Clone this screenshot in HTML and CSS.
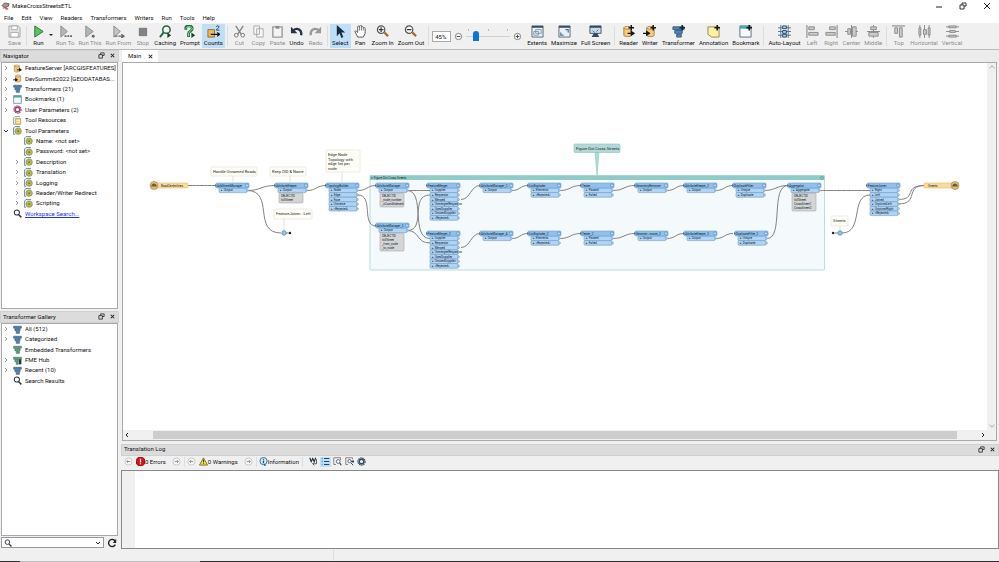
FILE: index.html
```html
<!DOCTYPE html>
<html lang="en">
<head>
<meta charset="utf-8">
<title>MakeCrossStreetsETL</title>
<link rel="stylesheet" href="styles.css">
</head>
<body>
<svg class="sprites" aria-hidden="true">
  <defs>
    <symbol id="save" viewBox="0 0 14 14"><path d="M1 1h10l2 2v10H1z" fill="#e2e2e2" stroke="#aaa"/><path d="M4 1h6v4H4zM3 8h8v5H3z" fill="#fff" stroke="#aaa"/></symbol>
    <symbol id="run" viewBox="0 0 14 14"><path d="M3 1l9 6-9 6z" fill="#5cc163" stroke="#27702f"/></symbol>
    <symbol id="runto" viewBox="0 0 14 14"><path d="M2 1l7 6-7 6z" fill="#b5b5b5" stroke="#8a8a8a"/><path d="M6 12h2M9 12h2M12 12h2" stroke="#666" stroke-width="2"/></symbol>
    <symbol id="runthis" viewBox="0 0 14 14"><path d="M3 1l8 6-8 6z" fill="#b5b5b5" stroke="#8a8a8a"/><circle cx="11" cy="12" r="1.6" fill="#666"/></symbol>
    <symbol id="runfrom" viewBox="0 0 14 14"><path d="M2 1l7 6-7 6z" fill="#c5c5c5" stroke="#8a8a8a"/><path d="M3 12h3M7 12h5M10 10l3 2-3 2" fill="none" stroke="#666" stroke-width="1.5"/></symbol>
    <symbol id="stop" viewBox="0 0 14 14"><path d="M3 3h9v9H3z" fill="#838383"/></symbol>
    <symbol id="caching" viewBox="0 0 14 14"><circle cx="8" cy="5" r="4" fill="#eef6ef" stroke="#24613f" stroke-width="1.6"/><path d="M5 8l-4 5" stroke="#24613f" stroke-width="2" fill="none"/><path d="M9 8l4 3-4 3z" fill="#173c2a"/></symbol>
    <symbol id="prompt" viewBox="0 0 14 14"><path d="M3 5V3c0-3 7-3 7 1 0 2-4 3-4 5v4" fill="none" stroke="#22703a" stroke-width="3"/><path d="M3 4c0-3 7-3 7 0 0 2-4 3-4 5v3" fill="none" stroke="#a5dfa9"/><path d="M9 8l4 3-4 3z" fill="#173c2a"/></symbol>
    <symbol id="counts" viewBox="0 0 14 14"><path d="M1 5h7v8H1z" fill="#f7b954" stroke="#9c6a1e"/><path d="M4 10h9M11 8l2.500 2-2.500 2" fill="none" stroke="#171717" stroke-width="1.4"/><path d="M10 2c0-1.500 3-1.500 3 0S10 4 10 5.500h3.500" fill="none" stroke="#26415d"/></symbol>
    <symbol id="cut" viewBox="0 0 14 14"><path d="M3 1l6 9M11 1L5 10" stroke="#858585" stroke-width="1.500"/><circle cx="3.500" cy="11" r="2" fill="none" stroke="#777"/><circle cx="10.500" cy="11" r="2" fill="none" stroke="#777"/></symbol>
    <symbol id="copy" viewBox="0 0 14 14"><path d="M2 1h6v9H2zM5 4h7v9H5z" fill="#f6f6f6" stroke="#aaa"/></symbol>
    <symbol id="paste" viewBox="0 0 14 14"><path d="M2 2h10v11H2z" fill="#f4f4f4" stroke="#999" stroke-width="1.500"/><path d="M5 1h4v3H5z" fill="#8a8a8a"/></symbol>
    <symbol id="undo" viewBox="0 0 14 14"><path d="M3 6c5-4 10-1 9 5" fill="none" stroke="#263442" stroke-width="2.500"/><path d="M1 2v7h7z" fill="#263442"/></symbol>
    <symbol id="redo" viewBox="0 0 14 14"><path d="M11 6C6 2 1 5 2 11" fill="none" stroke="#999" stroke-width="2.500"/><path d="M13 2v7H6z" fill="#999"/></symbol>
    <symbol id="select" viewBox="0 0 14 14"><path d="M3 0v12l3-3 2 5 2-1-2-5h4z" fill="#172b3d"/></symbol>
    <symbol id="pan" viewBox="0 0 14 14"><path d="M4 13L1 7c0-1 1-1 3 1V2c0-1 1-1 2 0V1c1-1 2-1 2 0v1c1-1 2 0 2 1 1-1 2 0 2 1v5l-2 4z" fill="#fff" stroke="#555"/><path d="M6 2v4M8 2v4M10 3v3" stroke="#777"/></symbol>
    <symbol id="zoomin" viewBox="0 0 14 14"><circle cx="5.500" cy="5" r="4" fill="#f7f7f7" stroke="#555" stroke-width="1.300"/><path d="M9 8l4 4" stroke="#a06b24" stroke-width="2.400"/><path d="M3 5h5M5.500 2.500v5" stroke="#333" stroke-width="1.300"/></symbol>
    <symbol id="zoomout" viewBox="0 0 14 14"><circle cx="5.500" cy="5" r="4" fill="#f7f7f7" stroke="#555" stroke-width="1.300"/><path d="M9 8l4 4" stroke="#a06b24" stroke-width="2.400"/><path d="M3 5h5" stroke="#333" stroke-width="1.300"/></symbol>
    <symbol id="extents" viewBox="0 0 14 14"><path d="M1 1h12v12H1z" fill="#e8eff5" stroke="#56697a"/><path d="M1 1h12v2H1z" fill="#3b4d5e"/><path d="M5 5h6v4H5zM3 7h5v4H3z" fill="none" stroke="#8098ac"/></symbol>
    <symbol id="maximize" viewBox="0 0 14 14"><path d="M1 1h12v12H1z" fill="#e8eff5" stroke="#56697a"/><path d="M1 1h12v2H1z" fill="#3b4d5e"/><path d="M8 5h3v3M6 11H3V8" fill="none" stroke="#46739a" stroke-width="1.300"/></symbol>
    <symbol id="full" viewBox="0 0 14 14"><path d="M1 1h12v8H1z" fill="#cbdbe8" stroke="#405468"/><path d="M1 1h12v2H1z" fill="#304a62"/><path d="M5 9L3 13h8l-2-4z" fill="#334a60"/><path d="M4 6l2 2M10 5L8 7" stroke="#38658b"/></symbol>
    <symbol id="reader" viewBox="0 0 14 14"><path d="M2 3v8c0 2 8 2 8 0V3z" fill="#f5ca78" stroke="#a78037"/><ellipse cx="6" cy="3" rx="4" ry="1.500" fill="#ffe2a7" stroke="#a78037"/><path d="M6 9h6M10 7l3 2-3 2z" stroke="#171717" stroke-width="1.300"/></symbol>
    <symbol id="writer" viewBox="0 0 14 14"><path d="M4 3v8c0 2 8 2 8 0V3z" fill="#f5ca78" stroke="#a78037"/><ellipse cx="8" cy="3" rx="4" ry="1.500" fill="#ffe2a7" stroke="#a78037"/><path d="M0 9h6M4 7l3 2-3 2z" stroke="#171717" stroke-width="1.300"/></symbol>
    <symbol id="readerplus" viewBox="0 0 14 14"><use href="#reader"/><path d="M10 0v6M7 3h6" stroke="#171717" stroke-width="1.600"/></symbol>
    <symbol id="writerplus" viewBox="0 0 14 14"><use href="#writer"/><path d="M11 0v6M8 3h6" stroke="#171717" stroke-width="1.600"/></symbol>
    <symbol id="transformer" viewBox="0 0 14 14"><path d="M1 2h12v3H1zM3 6h8v3H3zM5 10h5v3H5z" fill="#5586b5" stroke="#375b80"/></symbol>
    <symbol id="transformerplus" viewBox="0 0 14 14"><use href="#transformer"/><path d="M11 0v6M8 3h6" stroke="#172330" stroke-width="1.700"/></symbol>
    <symbol id="greentransformer" viewBox="0 0 14 14"><path d="M1 2h12v3H1zM3 6h8v3H3zM5 10h5v3H5z" fill="#67a58a" stroke="#39705a"/></symbol>
    <symbol id="hub" viewBox="0 0 14 14"><path d="M1 2h12v3H1zM3 6h5v3H3zM5 10h3v3H5z" fill="#67a58a" stroke="#39705a"/><path d="M9 5h4v8H9z" fill="#1e3b38"/></symbol>
    <symbol id="annotation" viewBox="0 0 14 14"><path d="M1 2h12v11H5l-4-3z" fill="#fff0a0" stroke="#8d8657"/><path d="M11 0v6M8 3h6" stroke="#171717" stroke-width="1.700"/></symbol>
    <symbol id="window" viewBox="0 0 14 14"><path d="M1 1h12v12H1z" fill="#f5f9fc" stroke="#536a7d"/><path d="M1 1h12v3H1z" fill="#4ca9a5"/></symbol>
    <symbol id="bookmark" viewBox="0 0 14 14"><use href="#window"/><path d="M11 0v6M8 3h6" stroke="#171717" stroke-width="1.700"/></symbol>
    <symbol id="auto" viewBox="0 0 14 14"><path d="M0 3h14M0 7h14M0 11h14M3 0v14M11 0v14" stroke="#50708e"/><path d="M5 1h4v3H5zM5 6h4v3H5zM5 10h4v3H5z" fill="#b4cee5" stroke="#244767"/></symbol>
    <symbol id="left" viewBox="0 0 14 14"><path d="M1 0v14" stroke="#777"/><path d="M3 2h6v3H3zM3 8h10v3H3z" fill="#ccc" stroke="#888"/></symbol>
    <symbol id="right" viewBox="0 0 14 14"><path d="M13 0v14" stroke="#777"/><path d="M5 2h6v3H5zM1 8h10v3H1z" fill="#ccc" stroke="#888"/></symbol>
    <symbol id="center" viewBox="0 0 14 14"><path d="M7 0v14M0 7h14" stroke="#888"/><path d="M3 4h3v6H3zM8 2h4v10H8z" fill="#ccc" stroke="#888"/></symbol>
    <symbol id="middle" viewBox="0 0 14 14"><path d="M7 0v14M0 7h14" stroke="#888"/><path d="M4 2h6v3H4zM2 8h10v4H2z" fill="#ccc" stroke="#888"/></symbol>
    <symbol id="top" viewBox="0 0 14 14"><path d="M0 1h14" stroke="#777"/><path d="M3 3h3v6H3zM8 3h3v10H8z" fill="#ccc" stroke="#888"/></symbol>
    <symbol id="horizontal" viewBox="0 0 14 14"><path d="M2 0v14M7 0v14M12 0v14" stroke="#888"/><path d="M1 3h2v8H1zM6 5h3v5H6zM11 3h2v8h-2z" fill="#ccc" stroke="#888"/></symbol>
    <symbol id="vertical" viewBox="0 0 14 14"><path d="M0 2h14M0 7h14M0 12h14" stroke="#888"/><path d="M3 1h8v2H3zM4 6h6v2H4zM3 11h8v2H3z" fill="#ccc" stroke="#888"/></symbol>
    <symbol id="params" viewBox="0 0 14 14"><path d="M3 13H1V3l2-2h8" fill="none" stroke="#456b93" stroke-width="1.300"/><circle cx="8" cy="8" r="5" fill="#b4b957" stroke="#8b8f45"/><circle cx="8" cy="8" r="1.500" fill="#727b36"/></symbol>
    <symbol id="resources" viewBox="0 0 14 14"><path d="M3 13H1V3l2-2h8" fill="none" stroke="#7b8797" stroke-width="1.300"/><path d="M4 4h8v9H4z" fill="#f4cf83" stroke="#b28a3c"/><path d="M5 7h6M5 10h6" stroke="#fff"/></symbol>
    <symbol id="gear" viewBox="0 0 14 14"><circle cx="7" cy="7" r="5.500" fill="none" stroke="currentColor" stroke-width="2" stroke-dasharray="2.300 1"/><circle cx="7" cy="7" r="3.500" fill="none" stroke="currentColor" stroke-width="2"/></symbol>
    <symbol id="search" viewBox="0 0 14 14"><circle cx="6" cy="5.500" r="4" fill="none" stroke="#26394a" stroke-width="1.600"/><path d="M9 9l4 4" stroke="#26394a" stroke-width="2.300"/></symbol>
    <symbol id="chevron" viewBox="0 0 6 6"><path d="M2 1l2 2-2 2" fill="none" stroke="#999"/></symbol>
    <symbol id="opened" viewBox="0 0 6 6"><path d="M1 2l2 2 2-2" fill="none" stroke="#333"/></symbol>
    <symbol id="close" viewBox="0 0 8 8"><path d="M2 2l4 4M6 2L2 6" stroke="#222" stroke-width="1.200"/></symbol>
    <symbol id="restore" viewBox="0 0 8 8"><path d="M3 3V1h4v3H5M1 3h4v4H1z" fill="none" stroke="#333"/></symbol>
    <symbol id="back" viewBox="0 0 10 10"><circle cx="5" cy="5" r="4" fill="#f8f8f8" stroke="#c4c4c4"/><path d="M7 5H3M4.500 3.500L3 5l1.500 1.500" fill="none" stroke="#888"/></symbol>
    <symbol id="forward" viewBox="0 0 10 10"><circle cx="5" cy="5" r="4" fill="#f8f8f8" stroke="#c4c4c4"/><path d="M3 5h4M5.500 3.500L7 5 5.500 6.500" fill="none" stroke="#888"/></symbol>
    <symbol id="error" viewBox="0 0 10 10"><path d="M3 0h4l3 3v4l-3 3H3L0 7V3z" fill="#cf1717" stroke="#811"/><path d="M5 2v4M5 7v1" stroke="#fff" stroke-width="1.400"/></symbol>
    <symbol id="warning" viewBox="0 0 10 10"><path d="M5 1l4.500 8h-9z" fill="#f3dd35" stroke="#75701c"/><path d="M5 3v3M5 7v1" stroke="#222"/></symbol>
    <symbol id="info" viewBox="0 0 10 10"><circle cx="5" cy="4.500" r="4" fill="#d8edfa" stroke="#2c6594"/><path d="M5 4v3M5 2v1M6 8l1 2" stroke="#174d7b" stroke-width="1.400"/></symbol>
    <symbol id="wrap" viewBox="0 0 12 12"><path d="M1 1l2 5 2-4 2 4 2-5" fill="none" stroke="#26333e" stroke-width="1.600"/><path d="M10 3v6H5M7 7L5 9l2 2" fill="none" stroke="#26333e"/></symbol>
    <symbol id="list" viewBox="0 0 12 12"><path d="M4 2h7M4 6h7M4 10h7" stroke="#27435d" stroke-width="1.300"/><path d="M1 2h1M1 6h1M1 10h1" stroke="#2177b5" stroke-width="2"/></symbol>
    <symbol id="find" viewBox="0 0 12 12"><path d="M4 10H1V1h9v3" fill="none" stroke="#666"/><circle cx="7" cy="6" r="2.500" fill="#fff" stroke="#29445d"/><path d="M9 8l2 3" stroke="#29445d" stroke-width="1.600"/></symbol>
    <symbol id="findnext" viewBox="0 0 12 12"><path d="M4 10H1V1h9v2" fill="none" stroke="#666"/><circle cx="6" cy="5.500" r="2.200" fill="#fff" stroke="#29445d"/><path d="M8 8l3 3M8 6h4M10 4l2 2-2 2" fill="none" stroke="#29445d" stroke-width="1.300"/></symbol>
    <symbol id="refresh" viewBox="0 0 12 12"><path d="M10 8a4.300 4.300 0 1 1 0-4" fill="none" stroke="#222" stroke-width="1.700"/><path d="M11 1v5H7z" fill="#222"/></symbol>
    <symbol id="minus" viewBox="0 0 10 10"><circle cx="5" cy="5" r="3.500" fill="#fff" stroke="#777"/><path d="M3 5h4" stroke="#444"/></symbol>
    <symbol id="plus" viewBox="0 0 10 10"><circle cx="5" cy="5" r="3.500" fill="#fff" stroke="#777"/><path d="M3 5h4M5 3v4" stroke="#444"/></symbol>
    <symbol id="logo" viewBox="0 0 10 10"><path d="M1 4l3-3 5 1-1 3-4 1z" fill="#a89990" stroke="#665b58"/><path d="M2 7l3-1 1 3M5 6l3 2" fill="none" stroke="#c4534b" stroke-width="1.200"/></symbol>
  </defs>
</svg>

<div class="app">
  <header class="titlebar">
    <svg class="logo"><use href="#logo"/></svg>
    <h1>MakeCrossStreetsETL</h1>
    <div class="window-buttons">
      <button aria-label="Minimize"><svg viewBox="0 0 8 8"><path d="M1 5h6" stroke="#222"/></svg></button>
      <button aria-label="Restore"><svg><use href="#restore"/></svg></button>
      <button aria-label="Close"><svg viewBox="0 0 8 8"><path d="M1 1l6 6M7 1L1 7" stroke="#222"/></svg></button>
    </div>
  </header>
  <nav class="menubar">
    <button>File</button><button>Edit</button><button>View</button><button>Readers</button><button>Transformers</button><button>Writers</button><button>Run</button><button>Tools</button><button>Help</button>
  </nav>

  <div class="toolbar">
    <button class="tool" disabled><svg><use href="#save"/></svg>Save</button>
    <span class="sep"></span>
    <button class="tool"><svg><use href="#run"/></svg>Run</button>
    <button class="drop" aria-label="Run options"></button>
    <button class="tool" disabled><svg><use href="#runto"/></svg>Run To</button>
    <button class="tool" disabled><svg><use href="#runthis"/></svg>Run This</button>
    <button class="tool" disabled><svg><use href="#runfrom"/></svg>Run From</button>
    <button class="tool" disabled><svg><use href="#stop"/></svg>Stop</button>
    <button class="tool"><svg><use href="#caching"/></svg>Caching</button>
    <button class="tool"><svg><use href="#prompt"/></svg>Prompt</button>
    <button class="tool on"><svg><use href="#counts"/></svg>Counts</button>
    <span class="sep"></span>
    <button class="tool" disabled><svg><use href="#cut"/></svg>Cut</button>
    <button class="tool" disabled><svg><use href="#copy"/></svg>Copy</button>
    <button class="tool" disabled><svg><use href="#paste"/></svg>Paste</button>
    <button class="tool"><svg><use href="#undo"/></svg>Undo</button>
    <button class="tool" disabled><svg><use href="#redo"/></svg>Redo</button>
    <span class="sep"></span>
    <button class="tool on"><svg><use href="#select"/></svg>Select</button>
    <button class="tool"><svg><use href="#pan"/></svg>Pan</button>
    <button class="tool"><svg><use href="#zoomin"/></svg>Zoom In</button>
    <button class="tool"><svg><use href="#zoomout"/></svg>Zoom Out</button>
    <span class="sep"></span>
    <div class="zoom">
      <input class="percent" type="text" value="45%" aria-label="Zoom level">
      <button aria-label="Decrease zoom"><svg><use href="#minus"/></svg></button>
      <input class="slider" type="range" min="0" max="100" value="18" aria-label="Zoom">
      <button aria-label="Increase zoom"><svg><use href="#plus"/></svg></button>
    </div>
    <button class="tool"><svg><use href="#extents"/></svg>Extents</button>
    <button class="tool"><svg><use href="#maximize"/></svg>Maximize</button>
    <button class="tool"><svg><use href="#full"/></svg>Full Screen</button>
    <span class="sep"></span>
    <button class="tool"><svg><use href="#readerplus"/></svg>Reader</button>
    <button class="tool"><svg><use href="#writerplus"/></svg>Writer</button>
    <button class="tool"><svg><use href="#transformerplus"/></svg>Transformer</button>
    <button class="tool"><svg><use href="#annotation"/></svg>Annotation</button>
    <button class="tool"><svg><use href="#bookmark"/></svg>Bookmark</button>
    <span class="sep"></span>
    <button class="tool"><svg><use href="#auto"/></svg>Auto-Layout</button>
    <button class="tool" disabled><svg><use href="#left"/></svg>Left</button>
    <button class="tool" disabled><svg><use href="#right"/></svg>Right</button>
    <button class="tool" disabled><svg><use href="#center"/></svg>Center</button>
    <button class="tool" disabled><svg><use href="#middle"/></svg>Middle</button>
    <span class="sep"></span>
    <button class="tool" disabled><svg><use href="#top"/></svg>Top</button>
    <button class="tool" disabled><svg><use href="#horizontal"/></svg>Horizontal</button>
    <button class="tool" disabled><svg><use href="#vertical"/></svg>Vertical</button>
  </div>

  <div class="workspace">
    <aside class="dock">
      <section class="panel navigator">
        <div class="panel-head"><h2>Navigator</h2><button aria-label="Float"><svg><use href="#restore"/></svg></button><button aria-label="Close"><svg><use href="#close"/></svg></button></div>
        <div class="tree-box">
          <ul class="tree nav-tree">
            <li><svg class="arrow"><use href="#chevron"/></svg><svg><use href="#reader"/></svg>FeatureServer [ARCGISFEATURES]</li>
            <li><svg class="arrow"><use href="#chevron"/></svg><svg><use href="#writer"/></svg>DevSummit2022 [GEODATABAS...</li>
            <li><svg class="arrow"><use href="#chevron"/></svg><svg><use href="#transformer"/></svg>Transformers (21)</li>
            <li><svg class="arrow"><use href="#chevron"/></svg><svg><use href="#window"/></svg>Bookmarks (1)</li>
            <li><svg class="arrow"><use href="#chevron"/></svg><svg class="plum"><use href="#gear"/></svg>User Parameters (2)</li>
            <li><svg class="arrow"></svg><svg><use href="#resources"/></svg>Tool Resources</li>
            <li><svg class="arrow"><use href="#opened"/></svg><svg><use href="#params"/></svg>Tool Parameters</li>
            <li class="child"><svg class="arrow"></svg><svg><use href="#params"/></svg>Name: &lt;not set&gt;</li>
            <li class="child"><svg class="arrow"></svg><svg><use href="#params"/></svg>Password: &lt;not set&gt;</li>
            <li class="child"><svg class="arrow"><use href="#chevron"/></svg><svg><use href="#params"/></svg>Description</li>
            <li class="child"><svg class="arrow"><use href="#chevron"/></svg><svg><use href="#params"/></svg>Translation</li>
            <li class="child"><svg class="arrow"><use href="#chevron"/></svg><svg><use href="#params"/></svg>Logging</li>
            <li class="child"><svg class="arrow"><use href="#chevron"/></svg><svg><use href="#params"/></svg>Reader/Writer Redirect</li>
            <li class="child"><svg class="arrow"><use href="#chevron"/></svg><svg><use href="#params"/></svg>Scripting</li>
            <li><svg class="arrow"></svg><svg><use href="#search"/></svg><a href="#search-workspace">Workspace Search...</a></li>
          </ul>
        </div>
      </section>
      <section class="panel gallery">
        <div class="panel-head"><h2>Transformer Gallery</h2><button aria-label="Float"><svg><use href="#restore"/></svg></button><button aria-label="Close"><svg><use href="#close"/></svg></button></div>
        <div class="tree-box">
          <ul class="tree gallery-tree">
            <li><svg class="arrow"><use href="#chevron"/></svg><svg><use href="#transformer"/></svg>All (512)</li>
            <li><svg class="arrow"><use href="#chevron"/></svg><svg><use href="#transformer"/></svg>Categorized</li>
            <li><svg class="arrow"></svg><svg><use href="#greentransformer"/></svg>Embedded Transformers</li>
            <li><svg class="arrow"><use href="#chevron"/></svg><svg><use href="#hub"/></svg>FME Hub</li>
            <li><svg class="arrow"><use href="#chevron"/></svg><svg><use href="#transformer"/></svg>Recent (10)</li>
            <li><svg class="arrow"></svg><svg><use href="#search"/></svg>Search Results</li>
          </ul>
        </div>
        <div class="search-row">
          <label class="search"><svg><use href="#search"/></svg><input type="text" aria-label="Search transformers"><svg class="arrow"><use href="#opened"/></svg></label>
          <button aria-label="Refresh"><svg><use href="#refresh"/></svg></button>
        </div>
      </section>
    </aside>

    <main class="content">
      <div class="tabs"><div class="tab">Main<button aria-label="Close tab"><svg><use href="#close"/></svg></button></div></div>
      <section class="canvas-frame">
        <div class="canvas"><svg id="diagram" role="img" aria-label="Workspace diagram"></svg></div>
        <div class="vbar"><i></i><i class="down"></i></div>
        <div class="hbar"><svg><path d="M5 1L3 3l2 2" fill="none" stroke="#222"/></svg><div class="track"><div class="thumb"></div></div><svg><path d="M3 1l2 2-2 2" fill="none" stroke="#222"/></svg></div>
      </section>
      <section class="log">
        <div class="panel-head"><h2>Translation Log</h2><button aria-label="Float"><svg><use href="#restore"/></svg></button><button aria-label="Close"><svg><use href="#close"/></svg></button></div>
        <div class="log-tools">
          <div class="group">
            <button aria-label="Previous error"><svg><use href="#back"/></svg></button>
            <button><svg><use href="#error"/></svg>0 Errors</button>
            <button class="next" aria-label="Next error"><svg><use href="#forward"/></svg></button>
          </div>
          <div class="group">
            <button aria-label="Previous warning"><svg><use href="#back"/></svg></button>
            <button><svg><use href="#warning"/></svg>0 Warnings</button>
            <button class="next" aria-label="Next warning"><svg><use href="#forward"/></svg></button>
          </div>
          <div class="group">
            <button><svg><use href="#info"/></svg>Information</button>
          </div>
          <div class="group options">
            <button aria-label="Wrap text"><svg><use href="#wrap"/></svg></button>
            <button class="on" aria-label="Line numbers"><svg><use href="#list"/></svg></button>
            <button aria-label="Find"><svg><use href="#find"/></svg></button>
            <button aria-label="Find next"><svg><use href="#findnext"/></svg></button>
            <button class="slate" aria-label="Log options"><svg><use href="#gear"/></svg></button>
          </div>
        </div>
        <div class="log-text"><div class="gutter"></div></div>
      </section>
    </main>
  </div>
  <footer class="statusbar"><span></span><span></span></footer>
  <div class="task-edge"></div>
</div>
<script src="diagram.js"></script>
</body>
</html>
```

FILE: styles.css
```css
* { box-sizing: border-box; }
body {
  margin: 0;
  font: 6px/8px Roboto, "Liberation Sans", Arial, sans-serif;
  color: #111;
  background: #f0f0f0;
}
h1, h2, ul { margin: 0; padding: 0; font: inherit; list-style: none; }
button {
  margin: 0;
  padding: 0;
  border: 0;
  background: none;
  font: inherit;
  color: inherit;
  display: flex;
  align-items: center;
}
input { font: inherit; color: inherit; margin: 0; min-width: 0; }
svg { display: block; flex: none; }
.sprites { position: absolute; width: 0; height: 0; }
.app { height: 100vh; display: flex; flex-direction: column; overflow: hidden; }

.titlebar { display: flex; align-items: center; height: 12px; padding: 0 8px 0 1px; background: #fff; gap: 2px; }
.logo { width: 9px; height: 9px; }
.window-buttons { display: flex; gap: 16px; margin-left: auto; }
.window-buttons svg { width: 8px; height: 8px; }
.menubar { display: flex; height: 11px; padding-left: 4px; gap: 8px; background: #fff; }

.toolbar { display: flex; height: 27px; padding: 1px 0 1px 5px; border-bottom: 1px solid #bbb; }
.tool { flex-direction: column; min-width: 19px; padding: 1px 2px 0; white-space: nowrap; }
.tool svg { width: 13px; height: 13px; margin-bottom: 1px; }
.tool:disabled { color: #8d8d8d; }
.on { background: #bfdff7; }
.sep { width: 1px; margin: 2px; background: #ddd; }
.drop { width: 6px; justify-content: center; }
.drop::after { content: ""; border: 2px solid transparent; border-top-color: #222; }
.zoom { display: flex; align-items: center; width: 94px; padding: 0 3px 0 1px; gap: 3px; }
.zoom svg { width: 9px; height: 9px; }
.percent { width: 19px; height: 11px; padding: 0 2px; border: 1px solid #aaa; background: #fff; }
.slider {
  flex: 1;
  height: 14px;
  appearance: none;
  background:
    linear-gradient(#bbb, #bbb) 5% 0 / 1px 2px no-repeat,
    linear-gradient(#bbb, #bbb) 50% 0 / 1px 2px no-repeat,
    linear-gradient(#bbb, #bbb) 95% 0 / 1px 2px no-repeat,
    linear-gradient(#d0d0d0, #d0d0d0) center / 100% 1px no-repeat;
}
.slider::-webkit-slider-thumb { appearance: none; width: 6px; height: 10px; background: #0878d4; border-radius: 3px 3px 0 0; }

.workspace { flex: 1; min-height: 0; display: grid; grid-template-columns: 119px 1fr; gap: 2px; }
.dock { display: flex; flex-direction: column; gap: 2px; min-height: 0; }
.panel { display: flex; flex-direction: column; min-height: 0; }
.navigator { flex: 259; }
.gallery { flex: 238; }
.panel-head { display: flex; align-items: center; flex: none; height: 12px; padding: 0 2px 1px; gap: 4px; background: #dcdcdc; border: 1px solid #d0d0d0; }
.panel-head h2 { flex: 1; }
.panel-head svg, .tab svg { width: 7px; height: 7px; }
.tree-box { flex: 1; min-height: 0; margin: 0 1px; border: 1px solid #aaa; background: #fff; overflow: hidden; }
.tree { display: grid; grid-auto-rows: 1fr; }
.nav-tree { height: 156px; }
.gallery-tree { height: 62px; }
.tree li { display: flex; align-items: center; white-space: nowrap; padding-left: 1px; }
.tree svg { width: 9px; height: 9px; margin-right: 3px; }
.tree .arrow { width: 6px; height: 6px; margin-right: 4px; }
.tree .child { padding-left: 12px; }
.tree a { color: #1a35e8; }
.plum { color: #9c3d72; }
.search-row { display: flex; align-items: center; height: 13px; padding: 0 2px 0 1px; gap: 3px; }
.search { flex: 1; display: flex; align-items: center; min-width: 0; height: 11px; padding: 0 2px; background: #fff; border: 1px solid #999; }
.search input { flex: 1; border: 0; padding: 0; background: none; height: 9px; }
.search svg { width: 8px; height: 8px; }
.search .arrow { width: 6px; height: 6px; }
.search-row button svg { width: 10px; height: 10px; }

.content { display: flex; flex-direction: column; min-width: 0; min-height: 0; }
.tabs { height: 12px; padding-left: 1px; display: flex; background: #ececec; }
.tab { display: flex; align-items: center; gap: 6px; padding: 0 4px 0 6px; background: #fff; }
.canvas-frame { flex: 379; min-height: 0; margin: 0 2px 0 1px; display: grid; grid-template: 1fr 10px / 1fr 9px; border: 1px solid #aaa; background: #f0f0f0; }
.canvas { overflow: hidden; background: #fff; }
.canvas svg { width: 100%; height: 100%; overflow: visible; }
.vbar { display: flex; flex-direction: column; justify-content: space-between; align-items: center; padding: 3px 0; }
.vbar i { width: 4px; height: 4px; border: solid #bbb; border-width: 1px 0 0 1px; transform: rotate(45deg); }
.vbar .down { transform: rotate(225deg); }
.hbar { display: flex; align-items: center; }
.hbar svg { width: 8px; height: 6px; }
.track { flex: 1; padding: 0 22px; }
.thumb { height: 8px; background: #cdcdcd; }
.log { flex: 106; min-height: 0; display: flex; flex-direction: column; margin-top: 3px; }
.log-tools { display: flex; align-items: center; height: 12px; padding-left: 1px; }
.log-tools svg { width: 9px; height: 9px; }
.group { display: flex; align-items: center; gap: 1px; padding: 0 2px 0 1px; border-right: 1px solid #ddd; }
.group button { height: 10px; padding: 0 1px; }
.group .next { margin-left: 3px; }
.group.options { border: 0; padding-left: 5px; }
.slate { color: #33495c; }
.log-text { flex: 1; display: flex; margin-top: 2px; background: #fff; border: 1px solid #888; }
.gutter { width: 13px; background: #f0f0f0; }

.statusbar { display: flex; flex: none; height: 12px; }
.statusbar span { flex: 2; border-left: 1px solid #ddd; }
.statusbar span:first-child { flex: 1; border: 0; }
.task-edge { flex: none; height: 1px; background: linear-gradient(90deg, #333 0 2%, #bbb 2% 20%, #333 20%); }

#diagram text { font-size: 3px; fill: #0e1b2a; }
#diagram .note-text { font-size: 4px; fill: #222; }
.wire { fill: none; stroke: #858180; stroke-width: 1; }
.head { fill: #91c0ec; stroke: #6b9dcd; }
.port { fill: #afd4f5; stroke: #7199c0; }
.attrs { fill: #d5d5d5; stroke: #aaa; }
.feature { fill: #fadb9c; stroke: #e9bc6c; }
.note { fill: #fffff8; stroke: #deded0; }
.area { fill: #f4fafb; stroke: #8fc9c7; }
.area-head { fill: #91cbc9; }
.big-note { fill: #b0dad7; stroke: #8ac4c0; }
```

FILE: diagram.js
```js
const NS = "http://www.w3.org/2000/svg";
const root = document.getElementById("diagram");
const scene = add(root, "g", { transform: "translate(-123 -63)" });

function add(parent, tag, attrs, text) {
  const el = document.createElementNS(NS, tag);
  for (const key in attrs) el.setAttribute(key, attrs[key]);
  if (text) el.textContent = text;
  parent.appendChild(el);
  return el;
}
function box(cls, x, y, width, height) {
  add(scene, "rect", { class: cls, x, y, width, height, rx: 1, "stroke-width": 0.6 });
}
function label(x, y, text, cls = "") {
  add(scene, "text", { x, y, class: cls }, text);
}
function wire(d) {
  add(scene, "path", { class: "wire", d });
}
// Horizontal S-curve between two ports
function link(x1, y1, x2, y2) {
  const m = (x1 + x2) / 2;
  wire(`M${x1} ${y1}C${m} ${y1} ${m} ${y2} ${x2} ${y2}`);
}
function node(x, y, title, ports, attrs = []) {
  attrs.length && box("attrs", x + 4, y + 10, 24, attrs.length * 4 + 2);
  attrs.forEach((a, i) => label(x + 6, y + 14 + i * 4, a));
  ports.forEach((p, i) => {
    box("port", x + 3, y + 5 + i * 4.6, 28, 4.6);
    label(x + 5, y + 8.4 + i * 4.6, "▸ " + p);
    add(scene, "path", { d: `M${x + 31} ${y + 6 + i * 4.6}l2 1.400-2 1.400z`, fill: "#bcd7ef", stroke: "#6f8dab", "stroke-width": 0.4 });
  });
  box("head", x, y, 33, 5);
  label(x + 1, y + 3.700, title);
  add(scene, "circle", { cx: x + 31, cy: y + 2.500, r: 1.600, fill: "#b9d9f5", stroke: "#4e83b8", "stroke-width": 0.6 });
  add(scene, "path", { d: `M${x - 1} ${y + 1}l2 1.500-2 1.500z`, fill: "#4277aa" });
}
function note(x, y, w, h, lines, tipX, tipY) {
  add(scene, "path", { d: `M${tipX} ${y + h}L${tipX} ${tipY}`, stroke: "#d5d5c5", "stroke-width": 0.7 });
  box("note", x, y, w, h);
  lines.forEach((t, i) => label(x + 2, y + 6 + i * 4.500, t, "note-text"));
}

box("area", 370, 175.5, 454.5, 94.5);
add(scene, "rect", { class: "area-head", x: 370, y: 175.5, width: 454.5, height: 4.5 });
label(371, 179, "▾ Figure Out Cross Streets");
add(scene, "circle", { cx: 822, cy: 178, r: 1.500, fill: "none", stroke: "#4f9491", "stroke-width": 0.6 });
add(scene, "path", { class: "big-note", d: "M595 152h4l-2 23z", "stroke-width": 0.6 });
box("big-note", 574, 144, 46, 8.5);
label(576, 149.5, "Figure Out Cross Streets", "note-text");

link(188, 185.5, 216, 185.5);
link(247, 190.5, 275, 185.5);
wire("M247 190.500C275 190.500 252 233 281 233");
link(307, 190.5, 326, 185.5);
link(358, 190.5, 376, 185.5);
wire("M358 195C374 195 361 226 376 226");
link(407, 190.5, 430, 190.5);
wire("M407 190.500C426 190.500 410 238.500 430 238.500");
wire("M407 230.500C427 230.500 409 195 430 195");
wire("M407 230.500C420 230.500 416 243 430 243");
for (const y of [183, 231]) {
  link(461, y + 16.5, 480, y + 2.5);
  link(512, y + 7.5, 528, y + 2.5);
  link(560, y + 7.5, 581, y + 2.5);
  link(613, y + 7.5, 635, y + 2.5);
  link(667, y + 7.5, 684, y + 2.5);
  link(716, y + 7.5, 733, y + 2.5);
}
link(764, 190.5, 788, 185.5);
wire("M767 238.500C784 238.500 770 185.500 788 185.500");
link(818, 190.5, 870, 190.5);
wire("M842 233C864 233 850 195 870 195");
wire("M898 199.500C918 199.500 902 185.500 925 185.500");
wire("M898 204C920 204 904 185.500 925 185.500");

box("feature", 156, 183, 32, 5);
label(161, 187, "RoadCenterlines");
box("feature", 924, 183, 32, 5);
label(928, 187, "Streets");
for (const [x, y] of [[154, 185.5], [955, 185.5]]) {
  add(scene, "circle", { cx: x, cy: y, r: 4, fill: "#e2bd72", stroke: "#a58b57", "stroke-width": 0.7 });
  add(scene, "path", { d: `M${x - 3} ${y + 1}c1-4 5-4 6 0z`, fill: "#6b5c3c" });
}

node(216, 183, "AddStreetManager", ["Output"]);
node(275, 183, "AttributeKeeper", ["Output"], ["OBJECTID", "fullStreet"]);
node(326, 183, "TopologyBuilder", ["Node", "Edge", "Face", "Universe", "<Rejected>"]);
node(376, 183, "AttributeManager", ["Output"], ["OBJECTID", "_node_number", "_xCoordIndexed"]);
node(376, 223, "AttributeManager_3", ["Output"], ["OBJECTID", "fullStreet", "_from_node", "_to_node"]);
const merge = ["Supplier", "Requestor", "Merged", "UnmergedRequestor", "UsedSupplier", "UnusedSupplier", "<Rejected>"];
node(427, 183, "FeatureMerger", merge);
node(427, 231, "FeatureMerger_2", merge);
node(480, 183, "AttributeManager_2", ["Output"]);
node(480, 231, "AttributeManager_4", ["Output"]);
node(528, 183, "ListExploder", ["Elements", "<Rejected>"]);
node(528, 231, "ListExploder_2", ["Elements", "<Rejected>"]);
node(581, 183, "Tester", ["Passed", "Failed"]);
node(581, 231, "Tester_2", ["Passed", "Failed"]);
node(635, 183, "GeometryRemover", ["Output"]);
node(635, 231, "Geometr…mover_2", ["Output"]);
node(684, 183, "AttributeKeeper_2", ["Output"]);
node(684, 231, "AttributeKeeper_3", ["Output"]);
node(733, 183, "DuplicateFilter", ["Unique", "Duplicate"]);
node(735, 231, "DuplicateFilter_2", ["Unique", "Duplicate"]);
node(788, 183, "Aggregator", ["Aggregate"], ["OBJECTID", "fullStreet", "CrossStreet1", "CrossStreet2"]);
node(867, 183, "FeatureJoiner", ["Right", "Left", "Joined", "UnjoinedLeft", "UnjoinedRight", "<Rejected>"]);

note(211, 167, 46, 9, ["Handle Unnamed Roads"], 233, 183);
note(270, 167, 36, 9, ["Keep OID & Name"], 290, 183);
note(326, 150, 34, 22, ["Edge-Node", "Topology with", "edge list per", "node"], 342, 183);
note(274, 209, 38, 10, ["FeatureJoiner : Left"], 284, 231);
note(831, 216, 17, 10, ["Streets"], 840, 231);
for (const [x, dot] of [[284, 290], [840, 833]]) {
  wire(`M${x} 233H${dot}`);
  add(scene, "circle", { cx: x, cy: 233, r: 2.200, fill: "#9fc6ea", stroke: "#4577a6", "stroke-width": 0.7 });
  add(scene, "circle", { cx: dot, cy: 233, r: 1.200, fill: "#222" });
}
```
